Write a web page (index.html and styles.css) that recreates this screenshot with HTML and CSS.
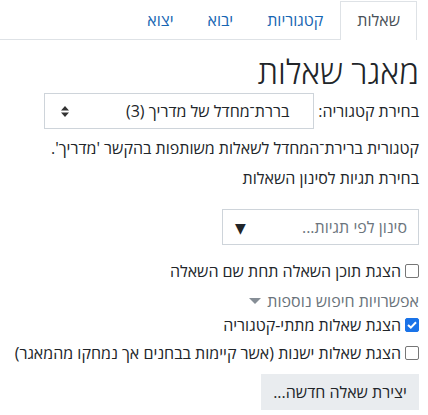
FILE: index.html
```html
<!DOCTYPE html>
<html lang="he" dir="rtl">
<head>
<meta charset="utf-8">
<link rel="stylesheet" href="styles.css">
</head>
<body>
<ul class="tabs">
  <li class="tab active">שאלות</li>
  <li class="tab">קטגוריות</li>
  <li class="tab">יבוא</li>
  <li class="tab">יצוא</li>
</ul>
<main class="content">
  <h2 class="title">מאגר שאלות</h2>
  <div class="cat-row">
    <label class="cat-label">בחירת קטגוריה:</label>
    <div class="select">
      <span class="select-text">בררת־מחדל של מדריך (3)</span>
      <svg class="updown" width="8" height="11" viewBox="0 0 8 11"><path d="M4 0 L8 4.5 H0 Z M0 6.5 H8 L4 11 Z" fill="#333"/></svg>
    </div>
  </div>
  <p class="desc">קטגורית ברירת־המחדל לשאלות משותפות בהקשר 'מדריך'.</p>
  <p class="tags-label">בחירת תגיות לסינון השאלות</p>
  <div class="tagbox">
    <span class="placeholder">סינון לפי תגיות...</span>
    <span class="tri">▼</span>
  </div>
  <label class="check first"><span class="box"></span>הצגת תוכן השאלה תחת שם השאלה</label>
  <div class="more">אפשרויות חיפוש נוספות <span class="caret"></span></div>
  <label class="check checked-row"><span class="box on"><svg width="10" height="8" viewBox="0 0 10 8"><path d="M1 4 L3.8 6.6 L9 1.2" stroke="#fff" stroke-width="2" fill="none"/></svg></span>הצגת שאלות מתתי-קטגוריה</label>
  <label class="check old"><span class="box"></span>הצגת שאלות ישנות (אשר קיימות בבחנים אך נמחקו מהמאגר)</label>
  <button class="btn">יצירת שאלה חדשה...</button>
</main>
</body>
</html>
```
FILE: styles.css
```css
html, body {
  margin: 0;
  padding: 0;
  background: #fff;
}
body {
  font-family: "Open Sans", "DejaVu Sans", sans-serif;
  font-size: 16px;
  color: #212529;
  overflow: hidden;
}
.tabs {
  list-style: none;
  display: flex;
  margin: 0 11px 0 0;
  padding: 1px 0 0 0;
  border-bottom: 1px solid #dee2e6;
  height: 38px;
}
.tab {
  padding: 0 16px;
  line-height: 36px;
  height: 37px;
  color: #1766b3;
  border: 1px solid transparent;
  border-bottom: none;
  white-space: nowrap;
}
.tab.active {
  color: #495057;
  border-color: #dee2e6;
  background: #fff;
  height: 38px;
  margin-bottom: -1px;
}
.content {
  padding: 0 9px 0 8px;
}
.title {
  margin: 14px 0 0 0;
  font-size: 33px;
  font-weight: 300;
  line-height: 36px;
}
.cat-row {
  display: flex;
  align-items: center;
  margin-top: 3px;
}
.cat-label {
  margin-left: 4px;
}
.select {
  height: 34px;
  border: 1px solid #ced4da;
  display: flex;
  align-items: center;
  justify-content: space-between;
  padding: 0 24px 0 16px;
  box-sizing: content-box;
  width: 228px;
}
.desc {
  margin: 8px 0 0 0;
  line-height: 22px;
}
.tags-label {
  margin: 8px 0 0 0;
  line-height: 22px;
}
.tagbox {
  margin-top: 20px;
  border: 1px solid #ced4da;
  display: flex;
  align-items: center;
  justify-content: space-between;
  padding: 0 11px 0 12px;
  box-sizing: border-box;
  width: 197px;
  height: 36px;
}
.placeholder {
  color: #6c757d;
}
.tri {
  font-size: 14px;
  color: #212529;
}
.check {
  display: flex;
  align-items: center;
  line-height: 22px;
}
.check.first { margin-top: 15px; }
.box {
  width: 12px;
  height: 12px;
  border: 1px solid #767676;
  border-radius: 2px;
  margin-left: 4px;
  flex: none;
  display: flex;
  align-items: center;
  justify-content: center;
}
.box.on {
  background: #1a73e8;
  border-color: #1a73e8;
}
.more {
  margin-top: 8px;
  color: #6a737b;
  line-height: 22px;
  display: flex;
  align-items: center;
}
.caret {
  width: 0;
  height: 0;
  border-left: 6px solid transparent;
  border-right: 6px solid transparent;
  border-top: 6px solid #868e96;
  margin-right: 6px;
}
.checked-row { margin-top: 2px; }
.old { margin-top: 6px; }
.btn {
  display: block;
  margin-top: 10px;
  font: inherit;
  color: #212529;
  background: #e9ecef;
  border: none;
  width: 158px;
  height: 36px;
  padding: 0;
  text-align: center;
}
```
